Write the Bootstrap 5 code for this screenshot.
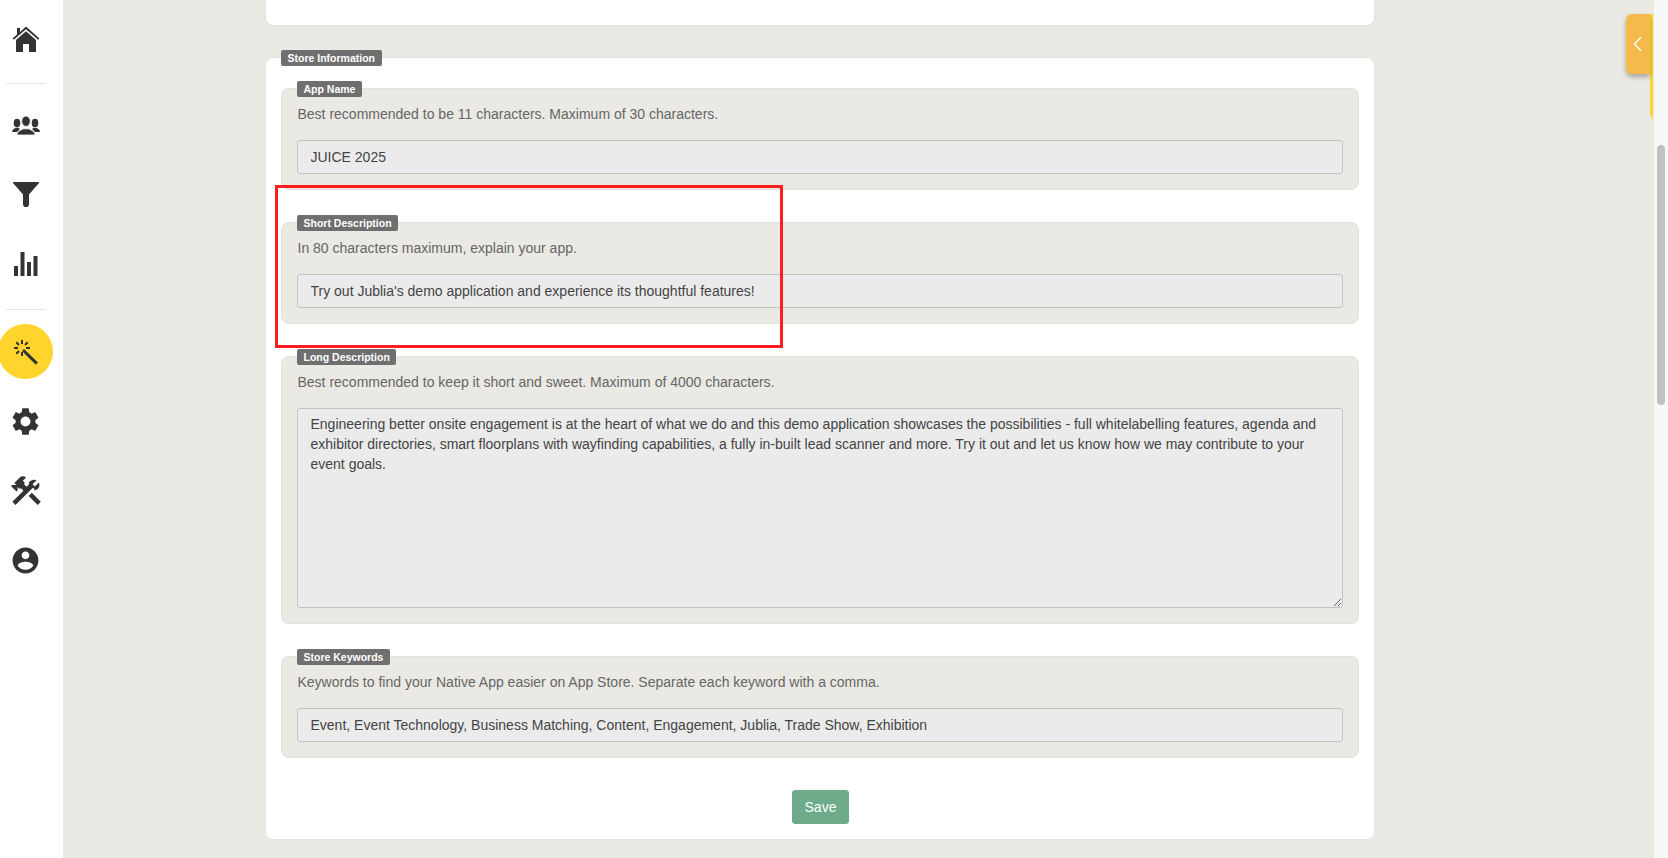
<!DOCTYPE html>
<html lang="en">
<head>
<meta charset="utf-8">
<title>Store Information</title>
<link href="https://cdn.jsdelivr.net/npm/bootstrap@5.3.0/dist/css/bootstrap.min.css" rel="stylesheet">
<style>
html,body{height:858px;overflow:hidden}
body{font-family:"Liberation Sans",Arial,sans-serif;font-size:14px;background:#eae9e4;color:#666}
.app-shell{height:858px}
.side-rail{width:63px;background:#fff;padding-top:4px}
.rail-item{height:69.5px;width:51px}
.rail-item svg{fill:#333}
.rail-rule{width:40px;height:1px;background:#e6e6e6;margin-left:6px}
.rule-a{margin-top:9px;margin-bottom:7px}
.rule-b{margin-top:10px}
.rail-active{width:55px;height:55px;background:#ffd42d;border-radius:50%;margin:14px 0 7.500px -2px}
.main-pane{width:1591px}
.page-col{width:1110px;margin-left:202px}
.stub-card{height:26px;background:#fff;border:1px solid #e2e2de;border-top:0;border-radius:0 0 8px 8px;margin-bottom:31px}
.sheet{background:#fff;border:1px solid #e2e2de;border-radius:8px;padding:30px 15px 15px}
.tag-label{position:absolute;top:-8px;left:15px;height:16px;background:#6f6f6f;color:#fff;font-size:10.500px;font-weight:700;line-height:16px;padding:0 6.500px;border-radius:2px}
.field-panel{background:#eae9e4;border:1px solid #e2e2de;border-radius:8px;padding:15px;margin-bottom:32px}
.field-hint{font-size:14px;line-height:20px;margin:0 0 16px;padding-left:.5px;color:#666}
.field-input{height:34px;padding:5px 12.500px;background:#ebebeb;border:1px solid #c2c2c2;border-radius:3px;font-size:14px;line-height:22px;color:#444;box-shadow:none}
.field-input:focus{background:#ebebeb;border-color:#c2c2c2;color:#444;box-shadow:none}
textarea.field-input{height:200px;line-height:20px;padding:5px 12.500px;display:block}
.save-btn{width:57px;height:34px;padding:0;margin-left:511px;background:#6dab8b;border:1px solid #6dab8b;color:#fff;font-size:14px;line-height:32px;border-radius:3px}
.scroll-track{width:14px;background:#f8f8f8}
.scroll-thumb{width:8px;height:260px;margin:145px 0 0 3px;background:#c1c1c1;border-radius:4px}
.mark-frame{position:absolute;left:275px;top:185px;width:508px;height:163px;border:3px solid #fd1f1f;pointer-events:none}
.drawer-strip{position:absolute;left:1650px;top:14px;width:3px;height:106px;background:#ffd42d;clip-path:polygon(0 0,100% 0,100% 100%,0 95%)}
.drawer-tab{position:absolute;left:1626px;top:14px;width:24px;height:60px;background:#f5b94c;border-radius:6px 0 0 6px;box-shadow:0 3px 5px rgba(0,0,0,.3)}
</style>
</head>
<body>
<div class="app-shell d-flex position-relative">
  <nav class="side-rail flex-shrink-0">
    <div class="rail-item d-flex align-items-center justify-content-center">
      <svg width="28" height="28" viewBox="0 0 28 28"><path d="M14 1.600 27.400 13.400l-1.200 1.300L14 4.200 1.800 14.700.6 13.400 5 9.500V3h3v3.900z"/><path d="M14 6.300 24 15v12h-7v-8h-6v8H4V15z"/></svg>
    </div>
    <div class="rail-rule rule-a"></div>
    <div class="rail-item d-flex align-items-center justify-content-center">
      <svg width="28" height="19" viewBox="0 0 28 19"><ellipse cx="5" cy="7" rx="3.300" ry="4.300"/><ellipse cx="23" cy="7" rx="3.300" ry="4.300"/><path d="M0 16c0-2.500 2-3 4-4.200h2L8 13 5 16z"/><path d="M28 16c0-2.500-2-3-4-4.200h-2L20 13l3 3z"/><g stroke="#fff" stroke-width=".8"><ellipse cx="14" cy="5.200" rx="4.300" ry="5.200"/><path d="M5 19c0-3.500 3-4.500 6.300-6.200h5.400C20 14.500 23 15.500 23 19z"/></g></svg>
    </div>
    <div class="rail-item d-flex align-items-center justify-content-center">
      <svg width="26" height="25" viewBox="0 0 26 25"><path d="M0 0h26v1L16 12.500V23l-1.500 2h-3L10 23V12.500L0 1z"/></svg>
    </div>
    <div class="rail-item d-flex align-items-center justify-content-center">
      <svg width="24" height="24" viewBox="0 0 24 24"><rect x="0" y="14" width="4" height="10"/><rect x="6.500" y="0" width="4" height="24"/><rect x="13" y="10" width="4" height="14"/><rect x="19.500" y="4" width="4" height="20"/></svg>
    </div>
    <div class="rail-rule rule-b"></div>
    <div class="rail-active d-flex align-items-center justify-content-center">
      <svg width="26" height="26" viewBox="0 0 26 26"><path d="M11 10 25 23.500l-2.200 2.200L9 12z" fill="#333"/><g stroke="#333" stroke-width="2" fill="none"><path d="M9 1v4M9 13v4M1 9h4M13 9h4M3.300 3.300l2.700 2.700M14.700 3.300 12 6M3.300 14.700 6 12"/></g></svg>
    </div>
    <div class="rail-item d-flex align-items-center justify-content-center">
      <svg width="33" height="33" viewBox="0 0 24 24"><path d="M19.140 12.940c.04-.3.060-.61.060-.94 0-.32-.02-.64-.07-.94l2.030-1.580c.18-.14.23-.41.120-.61l-1.920-3.320c-.12-.22-.37-.29-.59-.22l-2.390.96c-.5-.38-1.030-.7-1.620-.94l-.36-2.540c-.04-.24-.24-.41-.48-.41h-3.840c-.24 0-.43.17-.47.41l-.36 2.540c-.59.24-1.130.57-1.620.94l-2.390-.96c-.22-.08-.47 0-.59.22L2.740 8.870c-.12.21-.08.47.120.61l2.030 1.580c-.05.3-.09.63-.09.94s.02.64.07.94l-2.030 1.580c-.18.14-.23.41-.12.61l1.920 3.320c.12.22.37.29.59.22l2.390-.96c.5.38 1.030.7 1.620.94l.36 2.540c.05.24.24.41.48.41h3.840c.24 0 .44-.17.47-.41l.36-2.540c.59-.24 1.130-.56 1.620-.94l2.390.96c.22.08.47 0 .59-.22l1.920-3.320c.12-.22.070-.47-.12-.61l-2.010-1.580zM12 15.600c-1.980 0-3.600-1.620-3.600-3.600s1.620-3.600 3.600-3.600 3.600 1.620 3.600 3.600-1.620 3.600-3.600 3.600z"/></svg>
    </div>
    <div class="rail-item d-flex align-items-center justify-content-center">
      <svg width="36" height="36" viewBox="0 0 24 24"><path d="M13.780 15.300 19.780 21.300 21.890 19.140 15.890 13.140z"/><path d="M17.500 10.100c-.39 0-.8-.05-1.120-.18L5.010 21.280 2.900 19.170l7.410-7.400-1.770-1.770-.71.71-1.440-1.410V11.600l-.7.71L2.060 8.780l.71-.71h2.840L4.200 6.650 7.750 3.100c1.170-1.170 3.070-1.170 4.240 0L9.870 5.240l1.410 1.410-.71.71 1.770 1.770 1.820-1.820c-.13-.34-.18-.73-.18-1.120C13.980 6.180 15.560 4.500 17.500 4.500c.59 0 1.110.14 1.590.37L16.380 7.580l1.500 1.500 2.710-2.710c.24.48.38 1 .38 1.590 0 1.940-1.570 3.500-3.470 3.500z"/></svg>
    </div>
    <div class="rail-item d-flex align-items-center justify-content-center">
      <svg width="31" height="31" viewBox="0 0 24 24"><path d="M12 2C6.480 2 2 6.480 2 12s4.480 10 10 10 10-4.480 10-10S17.520 2 12 2zm0 3c1.660 0 3 1.340 3 3s-1.340 3-3 3-3-1.340-3-3 1.340-3 3-3zm0 14.200c-2.500 0-4.710-1.280-6-3.220.03-1.990 4-3.080 6-3.080 1.990 0 5.970 1.090 6 3.080-1.290 1.940-3.500 3.220-6 3.220z"/></svg>
    </div>
  </nav>

  <main class="main-pane flex-shrink-0">
    <div class="page-col">
      <div class="stub-card"></div>
      <section class="sheet position-relative">
        <span class="tag-label">Store Information</span>

        <div class="field-panel position-relative">
          <span class="tag-label">App Name</span>
          <p class="field-hint">Best recommended to be 11 characters. Maximum of 30 characters.</p>
          <input class="form-control field-input" type="text" value="JUICE 2025" readonly>
        </div>

        <div class="field-panel position-relative">
          <span class="tag-label">Short Description</span>
          <p class="field-hint">In 80 characters maximum, explain your app.</p>
          <input class="form-control field-input" type="text" value="Try out Jublia's demo application and experience its thoughtful features!" readonly>
        </div>

        <div class="field-panel position-relative">
          <span class="tag-label">Long Description</span>
          <p class="field-hint">Best recommended to keep it short and sweet. Maximum of 4000 characters.</p>
          <textarea class="form-control field-input" readonly>Engineering better onsite engagement is at the heart of what we do and this demo application showcases the possibilities - full whitelabelling features, agenda and exhibitor directories, smart floorplans with wayfinding capabilities, a fully in-built lead scanner and more. Try it out and let us know how we may contribute to your event goals.</textarea>
        </div>

        <div class="field-panel position-relative">
          <span class="tag-label">Store Keywords</span>
          <p class="field-hint">Keywords to find your Native App easier on App Store. Separate each keyword with a comma.</p>
          <input class="form-control field-input" type="text" value="Event, Event Technology, Business Matching, Content, Engagement, Jublia, Trade Show, Exhibition" readonly>
        </div>

        <button type="button" class="btn save-btn d-block">Save</button>
      </section>
    </div>
  </main>

  <div class="scroll-track flex-shrink-0"><div class="scroll-thumb"></div></div>

  <div class="drawer-strip"></div>
  <div class="drawer-tab d-flex align-items-center justify-content-center">
    <svg width="10" height="16" viewBox="0 0 10 16"><path d="M8 1 1.500 8 8 15" fill="none" stroke="#fff" stroke-width="1.400"/></svg>
  </div>
  <div class="mark-frame"></div>
</div>
<script src="https://cdn.jsdelivr.net/npm/bootstrap@5.3.0/dist/js/bootstrap.bundle.min.js"></script>
</body>
</html>
